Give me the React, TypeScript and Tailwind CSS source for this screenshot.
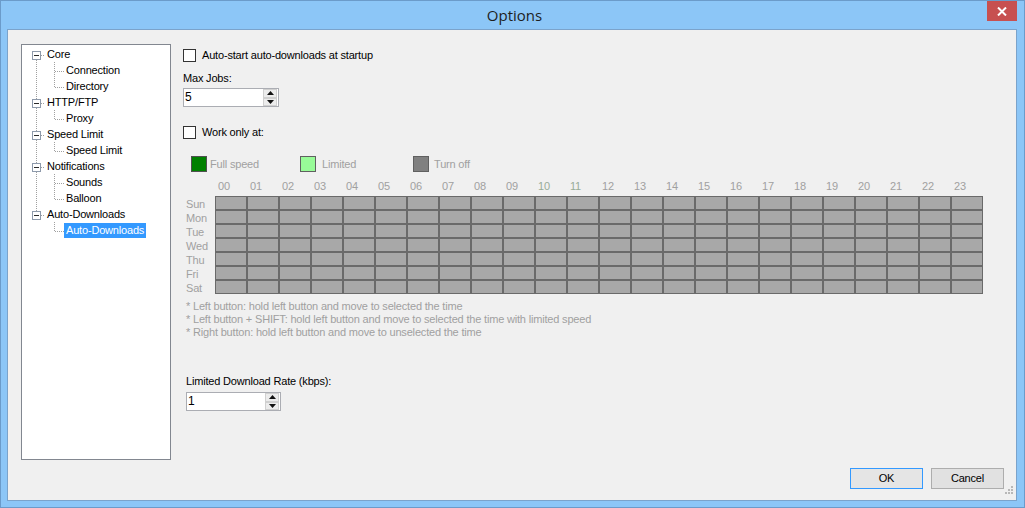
import React from "react";

const FONT = "font-['Liberation_Sans',Arial,sans-serif] text-[11px] tracking-[-0.18px]";

type Group = { label: string; children: string[]; selected?: number };

const TREE: Group[] = [
  { label: "Core", children: ["Connection", "Directory"] },
  { label: "HTTP/FTP", children: ["Proxy"] },
  { label: "Speed Limit", children: ["Speed Limit"] },
  { label: "Notifications", children: ["Sounds", "Balloon"] },
  { label: "Auto-Downloads", children: ["Auto-Downloads"], selected: 0 },
];

const DOT = { stroke: "#a0a0a0", strokeWidth: 1, strokeDasharray: "1 1", shapeRendering: "crispEdges" as const };

function TopRow({ label, first, last }: { label: string; first: boolean; last: boolean }) {
  return (
    <div className="flex h-[16px] items-center">
      <svg width="23" height="16" className="shrink-0">
        {!first && <line x1="14.5" y1="0" x2="14.5" y2="5" {...DOT} />}
        {!last && <line x1="14.5" y1="14" x2="14.5" y2="16" {...DOT} />}
        <line x1="19" y1="9.5" x2="23" y2="9.5" {...DOT} />
        <rect x="10.5" y="5.5" width="8" height="8" fill="#fff" stroke="#8e9aab" shapeRendering="crispEdges" />
        <line x1="12" y1="9.5" x2="17" y2="9.5" stroke="#2a2a2a" shapeRendering="crispEdges" />
      </svg>
      <span className="px-[2px] leading-[14px] text-black">{label}</span>
    </div>
  );
}

function ChildRow({ label, parentLast, lastChild, selected }: { label: string; parentLast: boolean; lastChild: boolean; selected: boolean }) {
  return (
    <div className="flex h-[16px] items-center">
      <svg width="42" height="16" className="shrink-0">
        {!parentLast && <line x1="14.5" y1="0" x2="14.5" y2="16" {...DOT} />}
        <line x1="32.5" y1="0" x2="32.5" y2={lastChild ? 10 : 16} {...DOT} />
        <line x1="33" y1="9.5" x2="42" y2="9.5" {...DOT} />
      </svg>
      <span className={`px-[2px] leading-[15px] ${selected ? "bg-[#3399ff] text-white" : "text-black"}`}>{label}</span>
    </div>
  );
}

function Checkbox({ label }: { label: string }) {
  return (
    <div className="flex h-[13px] items-center">
      <div className="h-[13px] w-[13px] shrink-0 border border-[#333333] bg-white" />
      <span className="ml-[6px] leading-[13px] text-black">{label}</span>
    </div>
  );
}

function Spinner({ value, wide }: { value: string; wide?: boolean }) {
  return (
    <div className={`flex h-[19px] ${wide ? "w-[96px]" : "w-[95px]"} border border-[#abadb3] bg-white`}>
      <div className="flex-1 pl-[1px] text-[12px] leading-[17px] text-black">{value}</div>
      <div className="mr-[1px] flex w-[14px] flex-col">
        <div className="flex h-[8.5px] items-center justify-center border border-[#d0d0d0] bg-[#ececec]">
          <svg width="7" height="4"><polygon points="3.5,0 7,4 0,4" fill="#111" /></svg>
        </div>
        <div className="flex h-[8.5px] items-center justify-center border border-[#d0d0d0] bg-[#ececec]">
          <svg width="7" height="4"><polygon points="0,0 7,0 3.5,4" fill="#111" /></svg>
        </div>
      </div>
    </div>
  );
}

const DAYS = ["Sun", "Mon", "Tue", "Wed", "Thu", "Fri", "Sat"];
const HOURS = Array.from({ length: 24 }, (_, i) => String(i).padStart(2, "0"));

export default function App() {
  return (
    <div className={`${FONT} flex h-[508px] w-[1025px] flex-col border border-[#6b9bca] bg-[#8cc6f7]`}>
      {/* Title bar */}
      <div className="grid h-[28px] grid-cols-[1fr_auto_1fr]">
        <div />
        <div className="pl-[4px] pt-[4px] font-['Open_Sans',sans-serif] text-[15px] leading-[20px] tracking-normal text-[#1e1e1e]">Options</div>
        <div className="flex justify-end pr-[7px]">
          <div className="flex h-[20px] w-[30px] items-center justify-center bg-[#c75050]">
            <svg width="10" height="9" viewBox="0 0 10 9">
              <path d="M1 0.5 L9 8.5 M9 0.5 L1 8.5" stroke="#fff" strokeWidth="2" />
            </svg>
          </div>
        </div>
      </div>

      {/* Content */}
      <div className="ml-[6px] flex h-[472px] w-[1010px] flex-col border border-[#7ba3cb] bg-[#f0f0f0]">
        <div className="flex pl-[13px] pt-[14px]">
          {/* Tree */}
          <div className="h-[416px] w-[150px] shrink-0 border border-[#828790] bg-white pt-[1px]">
            {TREE.map((g, gi) => (
              <React.Fragment key={gi}>
                <TopRow label={g.label} first={gi === 0} last={gi === TREE.length - 1} />
                {g.children.map((c, ci) => (
                  <ChildRow
                    key={ci}
                    label={c}
                    parentLast={gi === TREE.length - 1}
                    lastChild={ci === g.children.length - 1}
                    selected={g.selected === ci}
                  />
                ))}
              </React.Fragment>
            ))}
          </div>

          {/* Right panel */}
          <div className="ml-[12px] flex flex-col">
            <div className="mt-[5px]">
              <Checkbox label="Auto-start auto-downloads at startup" />
            </div>
            <div className="mt-[10px] leading-[13px] text-black">Max Jobs:</div>
            <div className="mt-[3px]">
              <Spinner value="5" wide />
            </div>
            <div className="mt-[19px]">
              <Checkbox label="Work only at:" />
            </div>

            {/* Legend */}
            <div className="mt-[17px] flex h-[16px] items-center pl-[8px] text-[#a0a0a0]">
              <div className="flex w-[109px] items-center">
                <div className="h-[16px] w-[16px] border border-[#505050] bg-[#008000]" />
                <span className="ml-[3px]">Full speed</span>
              </div>
              <div className="flex w-[113px] items-center">
                <div className="h-[16px] w-[16px] border border-[#606060] bg-[#98fb98]" />
                <span className="ml-[6px]">Limited</span>
              </div>
              <div className="flex items-center">
                <div className="h-[16px] w-[16px] border border-[#606060] bg-[#808080]" />
                <span className="ml-[5px]">Turn off</span>
              </div>
            </div>

            {/* Schedule grid */}
            <div className="ml-[3px] mt-[8px] flex flex-col">
              <div className="flex h-[16px] pl-[29px]">
                {HOURS.map((h) => (
                  <div key={h} className={`w-[32px] pl-[3px] leading-[13px] ${h === "10" || h === "11" ? "text-[#98ac98]" : "text-[#a0a0a0]"}`}>
                    {h}
                  </div>
                ))}
              </div>
              {DAYS.map((d) => (
                <div key={d} className="flex h-[14px]">
                  <div className="w-[29px] pt-[1px] leading-[14px] text-[#a0a0a0]">{d}</div>
                  {HOURS.map((h) => (
                    <div key={h} className="h-[14px] w-[32px] border border-[#6a6a6a] bg-[#a8a8a8]" />
                  ))}
                </div>
              ))}

              <div className="mt-[6px] flex flex-col leading-[13px] text-[#a0a0a0]">
                <div>* Left button: hold left button and move to selected the time</div>
                <div>* Left button + SHIFT: hold left button and move to selected the time with limited speed</div>
                <div>* Right button: hold left button and move to unselected the time</div>
              </div>

              <div className="mt-[36px] leading-[13px] text-black">Limited Download Rate (kbps):</div>
              <div className="mt-[4px]">
                <Spinner value="1" />
              </div>
            </div>
          </div>
        </div>

        {/* Buttons */}
        <div className="mt-[8px] flex h-[31px] items-start justify-end pr-[2px]">
          <button className="h-[21px] w-[73px] border border-[#3399ff] bg-[#e5e5e5] text-black">OK</button>
          <button className="ml-[8px] h-[21px] w-[73px] border border-[#adadad] bg-[#e1e1e1] text-black">Cancel</button>
          <svg width="10" height="10" className="mb-[4px] self-end">
            <rect x="7" y="1" width="2" height="2" fill="#b8b8b8" />
            <rect x="4" y="4" width="2" height="2" fill="#b8b8b8" />
            <rect x="7" y="4" width="2" height="2" fill="#b8b8b8" />
            <rect x="1" y="7" width="2" height="2" fill="#b8b8b8" />
            <rect x="4" y="7" width="2" height="2" fill="#b8b8b8" />
            <rect x="7" y="7" width="2" height="2" fill="#b8b8b8" />
          </svg>
        </div>
      </div>
    </div>
  );
}
